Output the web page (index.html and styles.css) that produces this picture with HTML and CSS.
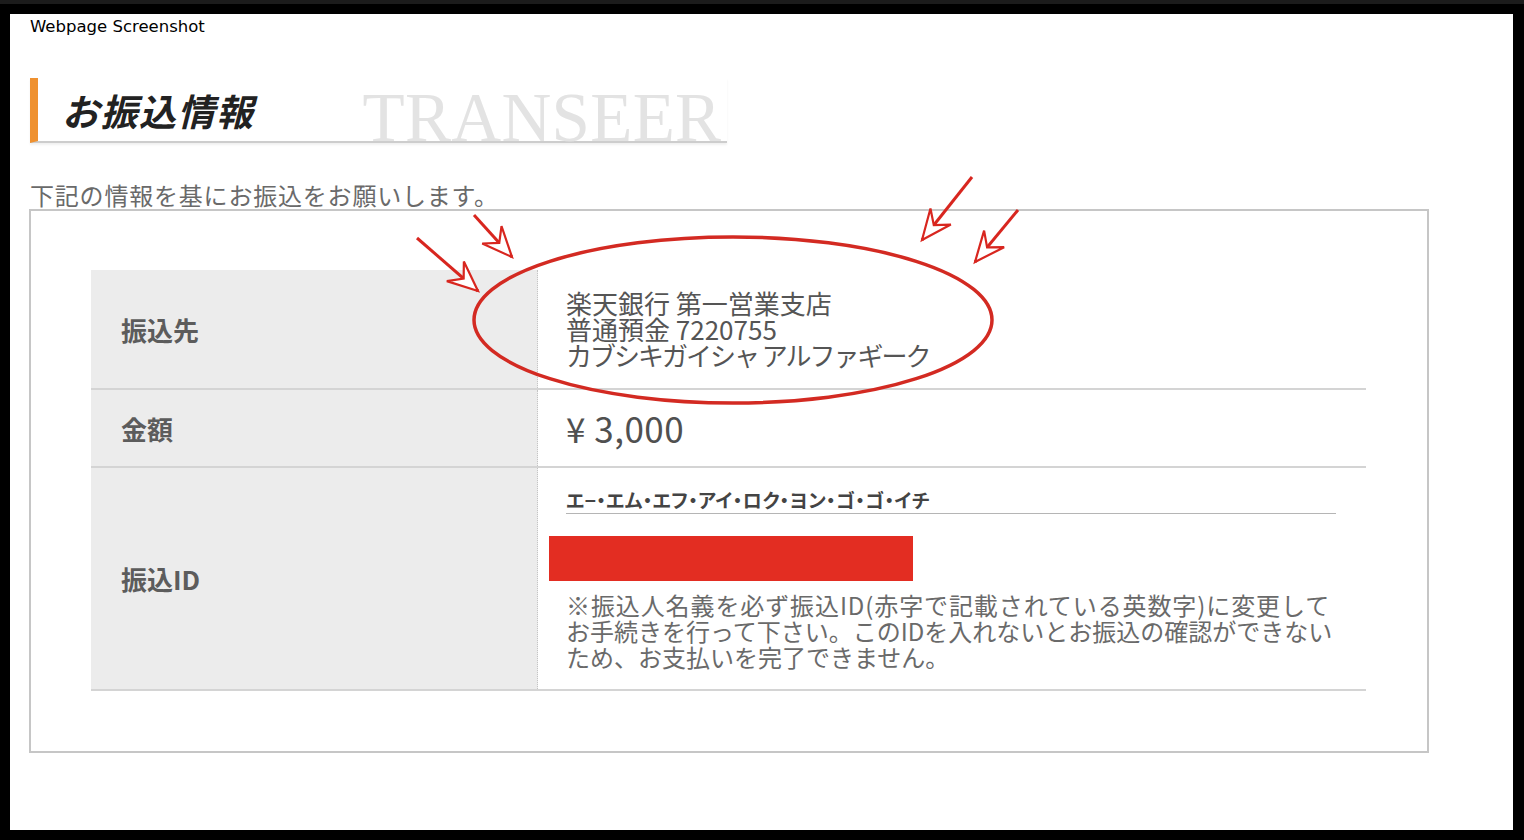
FILE: index.html
```html
<!DOCTYPE html>
<html lang="ja">
<head>
<meta charset="utf-8">
<title>お振込情報</title>
<link rel="stylesheet" href="styles.css">
</head>
<body>
<div class="page">
  <div class="caption">Webpage Screenshot</div>
  <div class="heading">
    <h1 class="heading-title">お振込情報</h1>
    <span class="heading-en">TRANSEER</span>
  </div>
  <p class="intro">下記の情報を基にお振込をお願いします。</p>
  <div class="box">
    <div class="info">
      <div class="row row-dest">
        <div class="label">振込先</div>
        <div class="value value-middle">
          <div>楽天銀行 第一営業支店</div>
          <div>普通預金 7220755</div>
          <div class="kana-name">カブシキガイシャ アルファギーク</div>
        </div>
      </div>
      <div class="row row-amount">
        <div class="label">金額</div>
        <div class="value value-middle amount">¥ 3,000</div>
      </div>
      <div class="row row-id">
        <div class="label">振込ID</div>
        <div class="value value-id">
          <div class="kana-id">エ−・エム・エフ・アイ・ロク・ヨン・ゴ・ゴ・イチ</div>
          <div class="redact"></div>
          <div class="note">
            <div class="note-first">※振込人名義を必ず振込ID(赤字で記載されている英数字)に変更して</div>
            <div>お手続きを行って下さい。このIDを入れないとお振込の確認ができない</div>
            <div>ため、お支払いを完了できません。</div>
          </div>
        </div>
      </div>
    </div>
  </div>
</div>
<svg class="annot" width="1524" height="840" viewBox="0 0 1524 840" xmlns="http://www.w3.org/2000/svg">
  <defs>
    <marker id="head" viewBox="-34 -16 38 32" markerWidth="38" markerHeight="32" refX="0" refY="0" orient="auto" markerUnits="userSpaceOnUse">
      <path d="M0,0 L-30,-13 L-19,0 L-30,13 Z" fill="#fff" stroke="#d8261f" stroke-width="2.2" stroke-linejoin="miter"/>
    </marker>
  </defs>
  <ellipse cx="733" cy="320" rx="259" ry="83" fill="none" stroke="#d32a22" stroke-width="3.5"/>
  <line x1="417" y1="238" x2="478" y2="291" stroke="#d8261f" stroke-width="3" marker-end="url(#head)"/>
  <line x1="474" y1="215" x2="512" y2="257" stroke="#d8261f" stroke-width="3" marker-end="url(#head)"/>
  <line x1="972" y1="177" x2="922" y2="240" stroke="#d8261f" stroke-width="3" marker-end="url(#head)"/>
  <line x1="1018" y1="210" x2="975" y2="262" stroke="#d8261f" stroke-width="3" marker-end="url(#head)"/>
</svg>
</body>
</html>
```

FILE: styles.css
```css
html, body {
  margin: 0;
  padding: 0;
}

body {
  position: relative;
  width: 1524px;
  height: 840px;
  padding-top: 14px;
  box-sizing: border-box;
  background: linear-gradient(#1c1c1c 0, #1c1c1c 4px, #000 4px);
  font-family: "Noto Sans CJK JP", "Noto Sans", sans-serif;
  overflow: hidden;
}

.page {
  margin: 0 11px 0 10px;
  height: 816px;
  background: #fff;
  padding-left: 19px;
  box-sizing: border-box;
}

.caption {
  font-family: "DejaVu Sans", sans-serif;
  font-size: 16.5px;
  line-height: 22px;
  height: 22px;
  padding-top: 2px;
  margin-left: 1px;
  color: #000;
}

.heading {
  margin-top: 40px;
  margin-left: 1px;
  width: 665px;
  height: 63px;
  border-left: 8px solid #ef9130;
  border-bottom: 2px solid #cdcdcd;
  box-shadow: 0 2px 2px rgba(0, 0, 0, 0.06);
  display: flex;
  align-items: center;
  padding-left: 24px;
}

.heading-title {
  margin: 2px 0 0 0;
  font-size: 37px;
  font-weight: bold;
  font-style: italic;
  letter-spacing: 1.5px;
  line-height: 1;
  color: #222;
  white-space: nowrap;
}

.heading-en {
  align-self: flex-end;
  margin-left: 108px;
  font-family: "Liberation Serif", serif;
  font-size: 69px;
  line-height: 46px;
  color: #e3e3e3;
  letter-spacing: 0.3px;
  white-space: nowrap;
}

.intro {
  margin: 39px 0 0 1px;
  font-size: 24px;
  line-height: 26px;
  letter-spacing: 0.8px;
  color: #6a6a6a;
}

.box {
  margin-top: 1px;
  width: 1400px;
  height: 544px;
  box-sizing: border-box;
  border: 2px solid #c6c6c6;
  padding: 59px 61px 60px 60px;
}

.info {
  width: 1275px;
}

.row {
  display: grid;
  grid-template-columns: 447px 1fr;
  border-bottom: 2px solid #d4d4d4;
}

.row-dest { min-height: 118px; }
.row-amount { min-height: 76px; }
.row-id { min-height: 221px; }

.label {
  background: #ececec;
  border-right: 1px dotted #c4c4c4;
  display: flex;
  align-items: center;
  padding-left: 30px;
  font-size: 26px;
  font-weight: bold;
  color: #5c5c5c;
}

.value {
  padding-left: 28px;
  padding-right: 30px;
  color: #555;
  font-size: 26px;
  line-height: 26px;
}

.value-middle {
  display: flex;
  flex-direction: column;
  justify-content: center;
}

.kana-name {
  letter-spacing: -2px;
}

.amount {
  font-size: 35px;
  letter-spacing: 0.5px;
  color: #505050;
}

.value-id {
  padding-top: 18px;
  padding-bottom: 19px;
}

.kana-id {
  font-size: 19px;
  font-weight: bold;
  line-height: 27px;
  letter-spacing: 0.4px;
  color: #444;
  font-feature-settings: "palt";
  border-bottom: 1px solid #b5b5b5;
  white-space: nowrap;
}

.redact {
  margin: 22px 0 0 -17px;
  width: 364px;
  height: 45px;
  background: #e32d22;
}

.note {
  margin-top: 11px;
  font-size: 24px;
  line-height: 26px;
  color: #6a6a6a;
  white-space: nowrap;
}

.note-first {
  letter-spacing: 0.9px;
}

.annot {
  position: absolute;
  left: 0;
  top: 0;
  pointer-events: none;
}
```
